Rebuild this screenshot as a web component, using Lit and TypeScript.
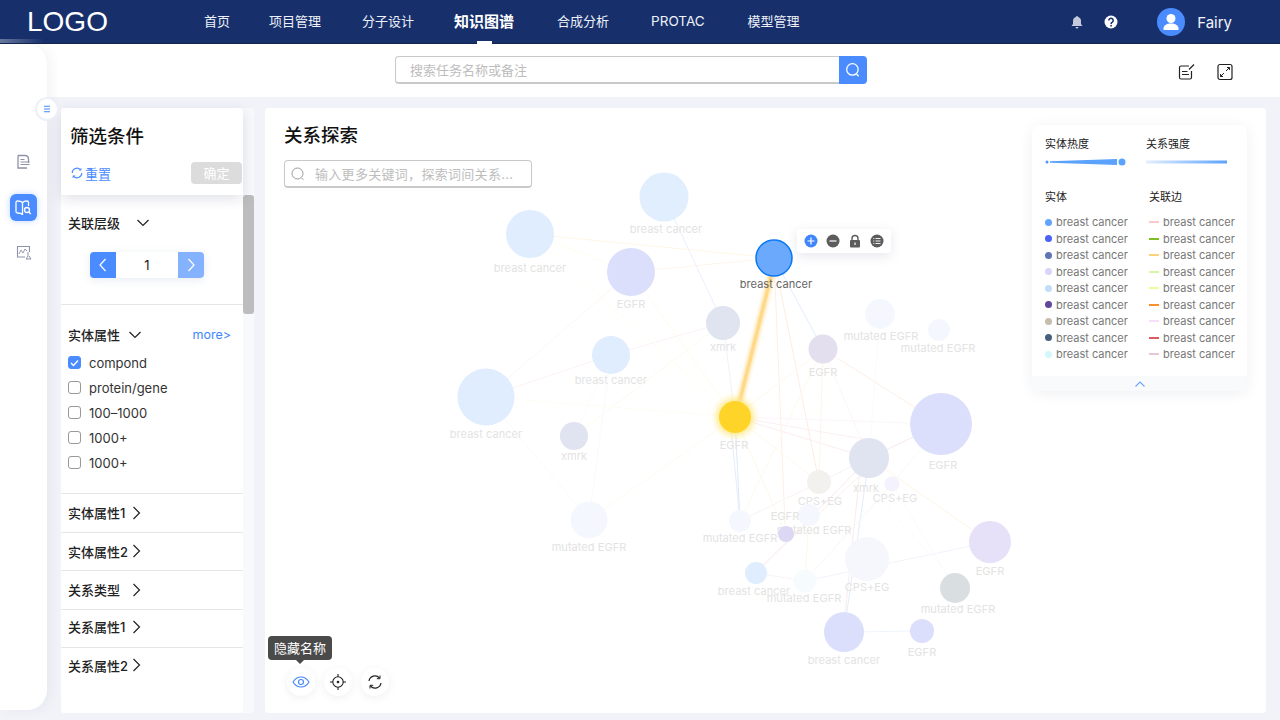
import { LitElement, html, css, svg } from "lit";
import { customElement } from "lit/decorators.js";

const FONT = css`Inter, "Noto Sans CJK SC", sans-serif`;

// ---- graph data, page coordinates (the svg viewBox starts at the panel corner)
type GNode = { x: number; y: number; r: number; c: string; t: string; lx?: number; ly: number };

const NODES: GNode[] = [
  { x: 664, y: 197, r: 24.5, c: "#e0eefe", t: "breast cancer", lx: 666, ly: 233 },
  { x: 530, y: 234, r: 24, c: "#dfedfe", t: "breast cancer", ly: 272 },
  { x: 631, y: 272, r: 24, c: "#dcdffc", t: "EGFR", ly: 308 },
  { x: 723, y: 323, r: 17, c: "#e0e3f0", t: "xmrk", ly: 351 },
  { x: 823, y: 349, r: 14.5, c: "#e3dfee", t: "EGFR", ly: 376 },
  { x: 880, y: 314, r: 15, c: "#f4f8fe", t: "mutated EGFR", lx: 881, ly: 340 },
  { x: 939, y: 330, r: 11, c: "#f4f8fe", t: "mutated EGFR", lx: 938, ly: 352 },
  { x: 611, y: 355, r: 19, c: "#dfedfe", t: "breast cancer", ly: 384 },
  { x: 486, y: 397, r: 28.5, c: "#dfedfe", t: "breast cancer", ly: 438 },
  { x: 574, y: 436, r: 14, c: "#e0e3f0", t: "xmrk", ly: 460 },
  { x: 941, y: 424, r: 31, c: "#dcdffc", t: "EGFR", lx: 943, ly: 469 },
  { x: 869, y: 458, r: 20, c: "#e0e3f0", t: "xmrk", lx: 866, ly: 492 },
  { x: 819, y: 482, r: 12, c: "#f2f1ed", t: "CPS+EG", lx: 820, ly: 505 },
  { x: 892, y: 484, r: 7.5, c: "#f3f2fd", t: "CPS+EG", lx: 895, ly: 502 },
  { x: 740, y: 521, r: 11, c: "#f4f8fe", t: "mutated EGFR", ly: 542 },
  { x: 809, y: 515, r: 11, c: "#f4f8fe", t: "mutated EGFR", lx: 814, ly: 534 },
  { x: 786, y: 534, r: 8, c: "#dcd8f4", t: "EGFR", lx: 785, ly: 520 },
  { x: 867, y: 559, r: 22, c: "#f6f6fd", t: "CPS+EG", ly: 591 },
  { x: 990, y: 542, r: 21, c: "#e6e1f8", t: "EGFR", ly: 575 },
  { x: 756, y: 573, r: 11, c: "#dfedfe", t: "breast cancer", lx: 754, ly: 595 },
  { x: 805, y: 581, r: 11.5, c: "#f6fcfe", t: "mutated EGFR", lx: 804, ly: 602 },
  { x: 955, y: 588, r: 15, c: "#d9dee1", t: "mutated EGFR", lx: 958, ly: 613 },
  { x: 844, y: 632, r: 20, c: "#dcdffc", t: "breast cancer", ly: 664 },
  { x: 922, y: 631, r: 12, c: "#dcdffc", t: "EGFR", ly: 656 },
  { x: 589, y: 520, r: 18.5, c: "#f4f8fe", t: "mutated EGFR", ly: 551 },
];

const EDGES: [number, number, number, number, string][] = [
  [530, 234, 774, 258, "#fff0d4"],
  [631, 272, 774, 258, "#ffeeda"],
  [530, 234, 631, 272, "#fdfbe2"],
  [530, 234, 735, 417, "#fdfbe2"],
  [664, 197, 723, 323, "#d8e6fb"],
  [631, 272, 486, 397, "#fcf0f2"],
  [631, 272, 735, 417, "#fbf9e0"],
  [611, 355, 723, 323, "#fbe8ee"],
  [486, 397, 611, 355, "#fbe8ee"],
  [486, 397, 735, 417, "#fcfbf0"],
  [486, 397, 589, 520, "#fbf6f2"],
  [574, 436, 723, 323, "#f8f8e2"],
  [574, 436, 611, 355, "#f8f8f4"],
  [611, 355, 589, 520, "#f5f6f8"],
  [589, 520, 735, 417, "#f9f9e4"],
  [723, 323, 735, 417, "#e2ebfa"],
  [774, 258, 823, 349, "#cfe0fb"],
  [774, 258, 785, 525, "#fde4d4"],
  [774, 258, 819, 482, "#fddfcf"],
  [823, 349, 941, 424, "#fde3d2"],
  [823, 349, 735, 417, "#fdf2de"],
  [823, 349, 819, 482, "#fdeed8"],
  [823, 349, 740, 521, "#fbf7df"],
  [823, 349, 869, 458, "#f8f3f0"],
  [880, 314, 869, 458, "#f6f7f9"],
  [735, 417, 941, 424, "#f9f0f8"],
  [735, 417, 869, 458, "#fae0ea"],
  [735, 417, 869, 440, "#fae4ec"],
  [735, 417, 740, 521, "#c6daf8"],
  [730, 417, 740, 521, "#cfe0fb"],
  [735, 417, 819, 482, "#fbf6dc"],
  [735, 417, 786, 534, "#fbf6dc"],
  [869, 458, 941, 424, "#f6d8d8"],
  [869, 458, 756, 573, "#f6dada"],
  [875, 462, 762, 566, "#f8e6e6"],
  [869, 458, 740, 521, "#fae8ee"],
  [869, 458, 990, 542, "#fdeed2"],
  [869, 458, 844, 632, "#cfdffb"],
  [860, 470, 845, 615, "#f6dedc"],
  [892, 484, 941, 424, "#f6f2f4"],
  [892, 484, 805, 581, "#f4f1ea"],
  [809, 515, 805, 581, "#fdf3da"],
  [756, 573, 805, 581, "#f9e9f0"],
  [805, 581, 990, 542, "#ece9f8"],
  [844, 632, 922, 631, "#e6edfc"],
  [892, 484, 955, 588, "#f7f7f8"],
  [880, 500, 990, 620, "#f9f9fa"],
];

const DOTS = ["#62a4fb", "#4a62f5", "#6075b5", "#d8d4fa", "#c4dcfb", "#60479b", "#c7bdaa", "#45617f", "#d4f6fd"];
const LINES = ["#fbc9c9", "#7fbd22", "#fdd27c", "#d5f9a2", "#eafc9e", "#fb8f2e", "#f5def7", "#dc5a62", "#e8c6da"];

@customElement("filter-panel")
export class FilterPanel extends LitElement {
  static styles = css`
    :host {
      display: flex;
      flex-direction: column;
      width: 193px;
      flex: none;
      background: #f8f9fc;
      color: #1a1a1a;
      font-family: ${FONT};
      border-radius: 0 4px 4px 0;
    }
    .head {
      width: 182px;
      height: 87px;
      box-sizing: border-box;
      padding: 16px 1px 11px 9px;
      background: #fff;
      border-radius: 4px 4px 0 0;
      box-shadow: 0 4px 14px rgba(40, 50, 90, 0.14);
      position: relative;
      z-index: 1;
    }
    .title {
      font-size: 18.5px;
      line-height: 24px;
      font-weight: 500;
      color: #111;
    }
    .acts {
      display: flex;
      align-items: center;
      justify-content: space-between;
      margin-top: 14px;
      height: 22px;
    }
    .reset {
      display: flex;
      align-items: center;
      gap: 2px;
      font-size: 13px;
      color: #4a8cff;
      padding-left: 1px;
    }
    .ok {
      width: 51px;
      height: 22px;
      line-height: 22px;
      text-align: center;
      font-size: 13px;
      color: #fff;
      background: #dcdcdc;
      border-radius: 4px;
    }
    .scroll {
      flex: 1;
      display: flex;
      min-height: 0;
    }
    .list {
      width: 182px;
      background: #fff;
      border-radius: 0 0 4px 4px;
    }
    .thumb {
      width: 11px;
      height: 119px;
      background: #bdbdbd;
      border-radius: 3px;
    }
    .sec {
      box-sizing: border-box;
      padding-left: 7px;
    }
    .sec + .sec {
      border-top: 1px solid #e6e6e6;
    }
    .h {
      display: flex;
      align-items: center;
      font-size: 13px;
      line-height: 20px;
      font-weight: 500;
      color: #222;
    }
    .lv {
      height: 109px;
      padding-top: 18px;
    }
    .lv .h svg {
      margin-left: 16px;
    }
    .stepper {
      display: flex;
      width: 114px;
      height: 26px;
      margin: 19px 0 0 22px;
      border-radius: 4px;
      box-shadow: 0 2px 8px rgba(60, 90, 160, 0.12);
      font-size: 13px;
    }
    .stepper div {
      display: flex;
      align-items: center;
      justify-content: center;
    }
    .prev {
      width: 26px;
      background: #4a8cff;
      border-radius: 4px 0 0 4px;
    }
    .val {
      flex: 1;
      background: #fff;
    }
    .next {
      width: 26px;
      background: #85b2ff;
      border-radius: 0 4px 4px 0;
    }
    .attr {
      height: 189px;
      padding-top: 20px;
      padding-right: 12px;
    }
    .attr .h svg {
      margin-left: 8px;
    }
    .more {
      margin-left: auto;
      color: #3d85ff;
      font-weight: 400;
      font-size: 12.5px;
    }
    .opts {
      margin-top: 5px;
    }
    .opt {
      display: flex;
      align-items: center;
      gap: 8px;
      height: 25px;
      font-size: 13px;
      color: #333;
    }
    .box {
      width: 11px;
      height: 11px;
      border: 1px solid #999;
      border-radius: 3px;
      background: #fff;
      display: flex;
      align-items: center;
      justify-content: center;
    }
    .box.on {
      background: #4a8cff;
      border-color: #4a8cff;
    }
    .row {
      height: 38.5px;
      display: flex;
      align-items: center;
      font-size: 13px;
      font-weight: 500;
      color: #222;
    }
    .row:nth-last-child(-n + 2) {
      padding-bottom: 3px;
    }
    .row span {
      width: 64px;
      white-space: nowrap;
    }
  `;

  private chevDown() {
    return html`<svg width="14" height="8" viewBox="0 0 14 8"><path d="M1.5 1l5.5 5.5L12.5 1" fill="none" stroke="#222" stroke-width="1.2"/></svg>`;
  }

  render() {
    const opts = ["compond", "protein/gene", "100–1000", "1000+", "1000+"];
    const rows = ["实体属性1", "实体属性2", "关系类型", "关系属性1", "关系属性2"];
    return html`
      <div class="head">
        <div class="title">筛选条件</div>
        <div class="acts">
          <div class="reset">
            <svg width="12" height="12" viewBox="0 0 12 12"><path d="M1.2 6a4.8 4.8 0 0 1 8.4-3.2M10.8 6a4.8 4.8 0 0 1-8.4 3.2" fill="none" stroke="#4a8cff" stroke-width="1.1"/><path d="M10 1v2.2H7.8M2 11V8.8h2.2" fill="none" stroke="#4a8cff" stroke-width=".8"/></svg>
            重置
          </div>
          <div class="ok">确定</div>
        </div>
      </div>
      <div class="scroll">
        <div class="list">
          <div class="sec lv">
            <div class="h">关联层级 ${this.chevDown()}</div>
            <div class="stepper">
              <div class="prev"><svg width="8" height="14" viewBox="0 0 8 14"><path d="M6.5 1L1 7l5.500 6" fill="none" stroke="#fff" stroke-width="1.2"/></svg></div>
              <div class="val">1</div>
              <div class="next"><svg width="8" height="14" viewBox="0 0 8 14"><path d="M1.500 1L7 7l-5.500 6" fill="none" stroke="#fff" stroke-width="1.2"/></svg></div>
            </div>
          </div>
          <div class="sec attr">
            <div class="h">实体属性 ${this.chevDown()}<span class="more">more&gt;</span></div>
            <div class="opts">
              ${opts.map(
                (o, i) => html`<div class="opt">
                  <span class="box ${i === 0 ? "on" : ""}">
                    ${i === 0
                      ? html`<svg width="9" height="8" viewBox="0 0 9 8"><path d="M1 4l2.500 2.500L8 1.500" fill="none" stroke="#fff" stroke-width="1.300"/></svg>`
                      : ""}
                  </span>
                  ${o}
                </div>`
              )}
            </div>
          </div>
          ${rows.map(
            (r) => html`<div class="sec row">
              <span>${r}</span>
              <svg width="9" height="14" viewBox="0 0 9 14"><path d="M1.500 1l6 6-6 6" fill="none" stroke="#222" stroke-width="1.200"/></svg>
            </div>`
          )}
        </div>
        <div class="thumb"></div>
      </div>
    `;
  }
}

@customElement("graph-view")
export class GraphView extends LitElement {
  static styles = css`
    :host {
      display: block;
      position: relative;
      width: 1001px;
      flex: none;
      background: #fff;
      border-radius: 4px;
      font-family: ${FONT};
      overflow: hidden;
    }
    .canvas {
      position: absolute;
      inset: 0;
      width: 1001px;
      height: 605px;
    }
    .canvas text {
      font-size: 11px;
      letter-spacing: 0.05px;
      text-anchor: middle;
      fill: #e3e3e3;
    }
    .canvas text.main {
      fill: #666;
    }
    .edges {
      opacity: 0.6;
    }
    .top {
      position: relative;
      padding: 15px 19px;
      width: 248px;
    }
    h2 {
      margin: 0;
      font-size: 18.5px;
      line-height: 24px;
      font-weight: 500;
      color: #111;
    }
    .find {
      display: flex;
      align-items: center;
      gap: 10px;
      box-sizing: border-box;
      width: 248px;
      height: 28px;
      margin-top: 13px;
      padding-left: 6px;
      border: 1px solid #c9c9c9;
      border-bottom-width: 2px;
      border-radius: 4px;
      background: #fff;
      font-size: 13px;
      letter-spacing: 0.3px;
      color: #bdbdbd;
      white-space: nowrap;
    }
    .legend {
      position: absolute;
      left: 767px;
      top: 17px;
      width: 215px;
      height: 266px;
      background: #fff;
      border-radius: 8px;
      box-shadow: 0 2px 14px rgba(50, 60, 100, 0.08);
      display: flex;
      flex-direction: column;
      overflow: hidden;
    }
    .cols {
      flex: 1;
      display: grid;
      grid-template-columns: 101px 1fr;
      align-content: start;
      padding-left: 13px;
    }
    .lt {
      font-size: 11px;
      line-height: 16px;
      color: #222;
    }
    .heat {
      padding-top: 11px;
      height: 64px;
      box-sizing: border-box;
    }
    .bar {
      margin-top: 6px;
      display: block;
    }
    .name {
      height: 16px;
    }
    .shift {
      padding-left: 3px;
    }
    .rows {
      margin-top: 9px;
    }
    .li {
      display: flex;
      align-items: center;
      height: 16.5px;
      font-size: 11px;
      color: #777;
      white-space: nowrap;
    }
    .dot {
      width: 7px;
      height: 7px;
      border-radius: 50%;
      margin-right: 4px;
      flex: none;
    }
    .ln {
      width: 10px;
      height: 2px;
      margin-right: 4px;
      flex: none;
    }
    .foot {
      height: 15px;
      background: #f9fafc;
      display: flex;
      align-items: center;
      justify-content: center;
    }
    .pop {
      position: absolute;
      left: 532px;
      top: 121px;
      width: 94px;
      height: 24px;
      box-sizing: border-box;
      padding-left: 7px;
      display: flex;
      align-items: center;
      gap: 8px;
      background: #fff;
      border-radius: 3px;
      box-shadow: 0 3px 12px rgba(50, 60, 100, 0.12);
    }
    .tools {
      position: absolute;
      left: 22px;
      top: 560px;
      display: flex;
      gap: 9px;
    }
    .tool {
      width: 28px;
      height: 28px;
      border-radius: 50%;
      background: #fff;
      box-shadow: 0 2px 8px rgba(50, 60, 100, 0.08);
      display: flex;
      align-items: center;
      justify-content: center;
    }
    .tip {
      position: absolute;
      left: 3px;
      top: 528px;
      width: 64px;
      height: 24px;
      line-height: 24px;
      text-align: center;
      font-size: 13px;
      color: #fff;
      background: #4a4a4a;
      border-radius: 4px;
    }
    .tip::after {
      content: "";
      position: absolute;
      left: 28px;
      top: 24px;
      border: 4px solid transparent;
      border-top-color: #4a4a4a;
      border-bottom: 0;
    }
  `;

  private graph() {
    return html`<svg class="canvas" viewBox="265 108 1001 605">
      <defs>
        <filter id="soft" x="-50%" y="-50%" width="200%" height="200%"><feGaussianBlur stdDeviation="3"/></filter>
        <filter id="soft2" x="-20%" y="-20%" width="140%" height="140%"><feGaussianBlur stdDeviation="1.500"/></filter>
      </defs>
      <g class="edges">
        ${EDGES.map((e) => svg`<line x1=${e[0]} y1=${e[1]} x2=${e[2]} y2=${e[3]} stroke=${e[4]} stroke-width="1"/>`)}
      </g>
      <line x1="772" y1="272" x2="738" y2="408" stroke="#ffe9b8" stroke-width="7" filter="url(#soft2)"/>
      <line x1="772" y1="272" x2="738" y2="408" stroke="#ffd88a" stroke-width="3.500"/>
      ${NODES.map(
        (n) => svg`<circle cx=${n.x} cy=${n.y} r=${n.r} fill=${n.c}/>
          <text x=${n.lx ?? n.x} y=${n.ly}>${n.t}</text>`
      )}
      <circle cx="735" cy="417" r="19" fill="#ffe98a" filter="url(#soft)"/>
      <circle cx="735" cy="417" r="16" fill="#ffd428"/>
      <text x="734" y="449">EGFR</text>
      <circle cx="774" cy="258" r="18" fill="#6aa9fb" stroke="#0b78f5" stroke-width="1.500"/>
      <text class="main" x="776" y="288">breast cancer</text>
    </svg>`;
  }

  render() {
    return html`
      ${this.graph()}
      <div class="top">
        <h2>关系探索</h2>
        <div class="find">
          <svg width="14" height="14" viewBox="0 0 14 14"><circle cx="6.500" cy="6.500" r="5.500" fill="none" stroke="#9a9a9a" stroke-width="1"/><path d="M10.800 11l1.500 1.800" stroke="#9a9a9a" stroke-width="1"/></svg>
          输入更多关键词，探索词间关系...
        </div>
      </div>

      <div class="legend">
        <div class="cols">
          <div class="heat">
            <div class="lt">实体热度</div>
            <svg class="bar" width="84" height="8" viewBox="0 0 84 8">
              <circle cx="2" cy="4" r="1.500" fill="#4d97fb"/>
              <path d="M5 3.300L72 1v6L5 4.700z" fill="#5aa2fc"/>
              <circle cx="77" cy="4" r="3.500" fill="#5aa2fc"/>
            </svg>
          </div>
          <div class="heat">
            <div class="lt">关系强度</div>
            <svg class="bar" width="84" height="8" viewBox="0 0 84 8">
              <defs><linearGradient id="g"><stop offset="0" stop-color="#e4effe"/><stop offset="1" stop-color="#5aa2fc"/></linearGradient></defs>
              <rect x="0" y="2.500" width="81" height="3" fill="url(#g)"/>
            </svg>
          </div>
          <div>
            <div class="lt name">实体</div>
            <div class="rows">
              ${DOTS.map((c) => html`<div class="li"><span class="dot" style="background:${c}"></span>breast cancer</div>`)}
            </div>
          </div>
          <div class="shift">
            <div class="lt name">关联边</div>
            <div class="rows">
              ${LINES.map((c) => html`<div class="li"><span class="ln" style="background:${c}"></span>breast cancer</div>`)}
            </div>
          </div>
        </div>
        <div class="foot">
          <svg width="10" height="6" viewBox="0 0 10 6"><path d="M.5 5.500L5 1l4.500 4.500" fill="none" stroke="#6ea6fb" stroke-width="1.100"/></svg>
        </div>
      </div>

      <div class="pop">
        <svg width="14" height="14" viewBox="0 0 14 14"><circle cx="7" cy="7" r="6.500" fill="#3f86fb"/><path d="M3.500 7h7M7 3.500v7" stroke="#fff" stroke-width="1.200"/></svg>
        <svg width="14" height="14" viewBox="0 0 14 14"><circle cx="7" cy="7" r="6.500" fill="#5c5c5c"/><path d="M3.500 7h7" stroke="#ddd" stroke-width="1.400"/></svg>
        <svg width="14" height="14" viewBox="0 0 14 14"><path d="M4 6.500V4.500a3 3 0 0 1 6 0v2" fill="none" stroke="#5c5c5c" stroke-width="1.400"/><rect x="2" y="6" width="10" height="7.500" rx="1" fill="#5c5c5c"/><rect x="6.400" y="8.500" width="1.200" height="2.500" fill="#fff"/></svg>
        <svg width="14" height="14" viewBox="0 0 14 14"><circle cx="7" cy="7" r="6.500" fill="#5c5c5c"/><path d="M5.500 4.500h5M5.500 7h5M5.500 9.500h5M3.300 4.500h1M3.300 7h1M3.300 9.500h1" stroke="#eee" stroke-width="1"/></svg>
      </div>

      <div class="tip">隐藏名称</div>
      <div class="tools">
        <div class="tool">
          <svg width="18" height="12" viewBox="0 0 18 12"><path d="M1 6c2-3.300 4.800-5 8-5s6 1.700 8 5c-2 3.300-4.800 5-8 5S3 9.300 1 6z" fill="none" stroke="#3f86fb" stroke-width="1.100"/><circle cx="9" cy="6" r="2.500" fill="none" stroke="#3f86fb" stroke-width="1.100"/></svg>
        </div>
        <div class="tool">
          <svg width="16" height="16" viewBox="0 0 16 16"><circle cx="8" cy="8" r="5.200" fill="none" stroke="#222" stroke-width="1.100"/><circle cx="8" cy="8" r="1.300" fill="#222"/><path d="M8 0v3M8 13v3M0 8h3M13 8h3" stroke="#222" stroke-width="1.100"/></svg>
        </div>
        <div class="tool">
          <svg width="16" height="16" viewBox="0 0 16 16"><path d="M2 7a6 6 0 0 1 10.500-3M14 9a6 6 0 0 1-10.500 3" fill="none" stroke="#222" stroke-width="1.200"/><path d="M13 1.500v3.200H9.800M3 14.500v-3.200h3.200" fill="none" stroke="#222" stroke-width="1"/></svg>
        </div>
      </div>
    `;
  }
}

@customElement("app-root")
export class AppRoot extends LitElement {
  static styles = css`
    :host {
      display: flex;
      flex-direction: column;
      width: 1280px;
      height: 720px;
      overflow: hidden;
      background: #f2f3f9;
      font-family: ${FONT};
    }
    .nav {
      display: flex;
      align-items: center;
      height: 44px;
      flex: none;
      box-sizing: border-box;
      background: #17306b;
      border-bottom: 1px solid #12264f;
      color: #fff;
      position: relative;
      z-index: 3;
    }
    .nav::after {
      content: "";
      position: absolute;
      left: 0;
      bottom: 0;
      width: 44px;
      height: 4px;
      background: linear-gradient(to right, rgba(255, 255, 255, 0.35), rgba(255, 255, 255, 0));
    }
    .logo {
      width: 177px;
      padding-left: 27px;
      box-sizing: content-box;
      font-family: "Liberation Sans", Arial, sans-serif;
      font-size: 28px;
      line-height: 44px;
      flex: none;
    }
    .menu {
      display: flex;
      align-items: center;
      height: 44px;
      gap: 41px;
    }
    .menu div {
      position: relative;
      height: 44px;
      line-height: 43px;
      font-size: 13px;
      color: #eef1f8;
      white-space: nowrap;
    }
    .menu div:nth-child(2) {
      margin-left: -2px;
    }
    .menu div:nth-child(4) {
      margin-left: -1px;
    }
    .menu div:nth-child(5) {
      margin-left: 2px;
    }
    .menu div:nth-child(6) {
      margin-left: 1px;
      font-size: 13.5px;
    }
    .menu div:nth-child(7) {
      margin-left: 2px;
    }
    .menu .cur {
      font-size: 15px;
      font-weight: 700;
      color: #fff;
    }
    .cur::after {
      content: "";
      position: absolute;
      left: 23px;
      bottom: 0;
      width: 15px;
      height: 3px;
      background: #fff;
    }
    .user {
      margin-left: auto;
      display: flex;
      align-items: center;
      padding-right: 48px;
    }
    .who {
      margin-left: 12px;
      font-size: 15px;
      color: #f2f4fa;
      padding-top: 2px;
    }
    .avatar {
      margin-left: 39px;
    }
    .help {
      margin-left: 21px;
    }
    .below {
      flex: 1;
      display: flex;
      min-height: 0;
      position: relative;
      background: linear-gradient(#fff 53px, #f2f3f9 53px);
    }
    .side {
      width: 47px;
      height: 666px;
      flex: none;
      box-sizing: border-box;
      padding: 110px 0 0 10px;
      background: #fff;
      border-radius: 0 20px 20px 0;
      box-shadow: 4px 0 12px rgba(50, 60, 100, 0.06);
      position: relative;
      z-index: 2;
      display: flex;
      flex-direction: column;
      align-items: flex-start;
    }
    .tile {
      width: 27px;
      height: 27px;
      margin: 24px 0;
      border-radius: 6px;
      background: #4a8cff;
      box-shadow: 0 0 6px rgba(74, 140, 255, 0.35);
      display: flex;
      align-items: center;
      justify-content: center;
    }
    .ico {
      width: 27px;
      height: 16px;
      display: flex;
      justify-content: center;
    }
    .toggle {
      position: absolute;
      left: 37px;
      top: 55px;
      width: 20px;
      height: 20px;
      border-radius: 50%;
      background: #fff;
      box-shadow: 0 0 0 2px #eef0f8;
      display: flex;
      align-items: center;
      justify-content: center;
      z-index: 3;
    }
    .col {
      flex: 1;
      display: flex;
      flex-direction: column;
      min-width: 0;
    }
    .bar {
      height: 53px;
      flex: none;
      display: flex;
      align-items: center;
      background: #fff;
      padding-left: 348px;
      box-sizing: border-box;
      padding-bottom: 1px;
    }
    .search {
      display: flex;
      width: 472px;
      height: 28px;
    }
    .input {
      flex: 1;
      box-sizing: border-box;
      padding-left: 14px;
      border: 1px solid #c9c9c9;
      border-bottom-width: 2px;
      border-right: 0;
      border-radius: 4px 0 0 4px;
      font-size: 13px;
      line-height: 26px;
      color: #bdbdbd;
    }
    .go {
      width: 28px;
      background: #4a8cff;
      border-radius: 0 4px 4px 0;
      display: flex;
      align-items: center;
      justify-content: center;
    }
    .acts {
      margin-left: auto;
      display: flex;
      gap: 20px;
      padding-right: 46px;
      padding-top: 4px;
    }
    .content {
      flex: 1;
      display: flex;
      gap: 11px;
      padding: 11px 14px 7px;
      min-height: 0;
    }
  `;

  render() {
    const menu = ["首页", "项目管理", "分子设计", "知识图谱", "合成分析", "PROTAC", "模型管理"];
    return html`
      <div class="nav">
        <div class="logo">LOGO</div>
        <div class="menu">
          ${menu.map((m) => html`<div class=${m === "知识图谱" ? "cur" : ""}>${m}</div>`)}
        </div>
        <div class="user">
          <svg width="12" height="14" viewBox="0 0 12 14"><path d="M6 1a1 1 0 0 1 1 1c2 .5 3 2 3 4v3l1.500 2h-11L2 9V6c0-2 1-3.500 3-4a1 1 0 0 1 1-1z" fill="#c4cadb"/><path d="M4.500 12h3a1.500 1.500 0 0 1-3 0z" fill="#c4cadb"/></svg>
          <svg class="help" width="14" height="14" viewBox="0 0 14 14"><circle cx="7" cy="7" r="6.500" fill="#fff"/><path d="M4.800 5.400a2.200 2.200 0 1 1 3.500 1.800c-.8.500-1.200.9-1.200 1.700" fill="none" stroke="#17306b" stroke-width="1.500"/><circle cx="7.100" cy="10.700" r=".9" fill="#17306b"/></svg>
          <svg class="avatar" width="28" height="28" viewBox="0 0 28 28"><circle cx="14" cy="14" r="14" fill="#4a8cff"/><circle cx="14" cy="10.500" r="4.500" fill="#fff"/><path d="M6.500 20.500c0-3 3-5 7.500-5s7.500 2 7.500 5v1.500h-15z" fill="#fff"/></svg>
          <span class="who">Fairy</span>
        </div>
      </div>
      <div class="below">
        <div class="side">
          <div class="ico">
            <svg width="16" height="16" viewBox="0 0 16 16"><path d="M2 1.500h7c2.500 0 3.500 2 3.500 4V9M2 1.500v12.500h9" fill="none" stroke="#8d91ab" stroke-width="1.300"/><path d="M4.500 5.500h4M4.500 8h9M4.500 10.500h9" stroke="#8d91ab" stroke-width="1.200"/></svg>
          </div>
          <div class="tile">
            <svg width="17" height="15" viewBox="0 0 17 15"><path d="M7.500 2.500C6.500 1.300 4.500 1 2.500 1 1.500 1 1 1.500 1 2.500v9c0 1 .5 1.500 1.500 1.500 2 0 4 .3 5 1.500zM7.500 2.500C8.500 1.300 10.500 1 12 1c1 0 1.500.5 1.500 1.500V6" fill="none" stroke="#fff" stroke-width="1.300"/><circle cx="12" cy="10" r="2.500" fill="none" stroke="#fff" stroke-width="1.300"/><path d="M13.800 12l2 2" stroke="#fff" stroke-width="1.300"/></svg>
          </div>
          <div class="ico">
            <svg width="16" height="15" viewBox="0 0 16 15"><path d="M9 12H1.500V1.500h12V7" fill="none" stroke="#8d91ab" stroke-width="1.100"/><path d="M3 9l2-4 2 3 2-4 2 2" fill="none" stroke="#8d91ab" stroke-width=".9"/><path d="M12 7v4l-2 3h5l-2-3" fill="none" stroke="#8d91ab" stroke-width="1"/></svg>
          </div>
        </div>
        <div class="toggle">
          <svg width="8" height="8" viewBox="0 0 8 8"><path d="M1 1.200h6M1 4h6M1 6.800h6" stroke="#3f86fb" stroke-width="1.100"/></svg>
        </div>
        <div class="col">
          <div class="bar">
            <div class="search">
              <div class="input">搜索任务名称或备注</div>
              <div class="go">
                <svg width="16" height="16" viewBox="0 0 14 14"><circle cx="6.500" cy="6.500" r="5" fill="none" stroke="#fff" stroke-width="1.100"/><path d="M10 10.500l2 2" stroke="#fff" stroke-width="1.100"/></svg>
              </div>
            </div>
            <div class="acts">
              <svg width="18" height="18" viewBox="0 0 18 18"><path d="M11 3H3a1.500 1.500 0 0 0-1.500 1.500v10A1.500 1.500 0 0 0 3 16h9a1.500 1.500 0 0 0 1.500-1.500V8" fill="none" stroke="#222" stroke-width="1.200"/><path d="M4 8.500h5.500M4 11.500h7M11 6.500L16 1.500" fill="none" stroke="#222" stroke-width="1.200"/></svg>
              <svg width="18" height="18" viewBox="0 0 18 18"><rect x="2" y="1.500" width="14" height="15" rx="2" fill="none" stroke="#222" stroke-width="1.200"/><path d="M10 8l3.500-3.500M11 4.500h2.500V7M8 10l-3.500 3.500M7 13.500H4.500V11" fill="none" stroke="#222" stroke-width="1"/></svg>
            </div>
          </div>
          <div class="content">
            <filter-panel></filter-panel>
            <graph-view></graph-view>
          </div>
        </div>
      </div>
    `;
  }
}
